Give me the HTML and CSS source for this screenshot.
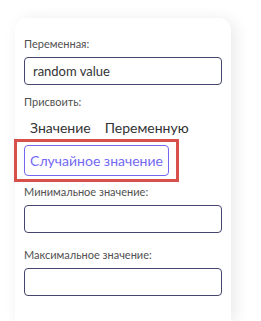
FILE: index.html
```html
<!DOCTYPE html>
<html lang="ru">
<head>
    <meta charset="UTF-8">
    <meta name="viewport" content="width=device-width, initial-scale=1.0">
    <title>Присвоить</title>
    <link rel="stylesheet" href="styles.css">
</head>
<body>
    <div class="card">
        <div class="field">
            <label class="field-label" for="varName">Переменная:</label>
            <input class="field-input" id="varName" type="text" value="random value">
        </div>

        <div class="field-label">Присвоить:</div>
        <div class="tabs">
            <span class="tab">Значение</span>
            <span class="tab">Переменную</span>
        </div>
        <div class="highlight">
            <button class="tab-active">Случайное значение</button>
        </div>

        <div class="field">
            <label class="field-label" for="minVal">Минимальное значение:</label>
            <input class="field-input" id="minVal" type="text">
        </div>
        <div class="field">
            <label class="field-label" for="maxVal">Максимальное значение:</label>
            <input class="field-input" id="maxVal" type="text">
        </div>
    </div>
</body>
</html>
```

FILE: styles.css
```css
:root {
    --text: #505050;
    --text-dark: #333333;
    --border: #45456e;
    --accent: #7468f2;
    --mark: #d8504a;
}

* {
    box-sizing: border-box;
}

body {
    margin: 0;
    height: 321px;
    overflow: hidden;
    background: #ffffff;
    font-family: Lato, "Noto Sans", sans-serif;
    color: var(--text);
}

.card {
    margin: 18px 0 0 15px;
    width: 216px;
    height: 303px;
    padding: 19px 9px 0 9px;
    background: #ffffff;
    border-radius: 12px 12px 0 0;
    box-shadow: 4px 2px 16px rgba(0, 0, 0, 0.09);
}

.field-label {
    display: block;
    font-size: 11px;
    line-height: 14px;
    color: var(--text);
}

.field-input {
    display: block;
    width: 100%;
    height: 28px;
    margin-top: 6px;
    padding: 0 8px;
    border: 1px solid var(--border);
    border-radius: 4px;
    font-family: inherit;
    font-size: 13px;
    color: var(--text-dark);
}

.field {
    margin-bottom: 10px;
}

.highlight + .field {
    margin-top: 3px;
    margin-bottom: 15px;
}

.tabs {
    display: flex;
    gap: 14px;
    padding: 10px 0 0 6px;
    height: 30px;
}

.tab {
    font-size: 14px;
    line-height: 18px;
    color: var(--text-dark);
}

.highlight {
    width: max-content;
    margin-left: -10px;
    padding: 3px 7px;
    border: 3px solid var(--mark);
}

.tab-active {
    display: block;
    width: 145px;
    height: 31px;
    padding: 0;
    background: #ffffff;
    border: 1px solid var(--accent);
    border-radius: 4px;
    font-family: inherit;
    font-size: 14px;
    color: var(--accent);
}
```
